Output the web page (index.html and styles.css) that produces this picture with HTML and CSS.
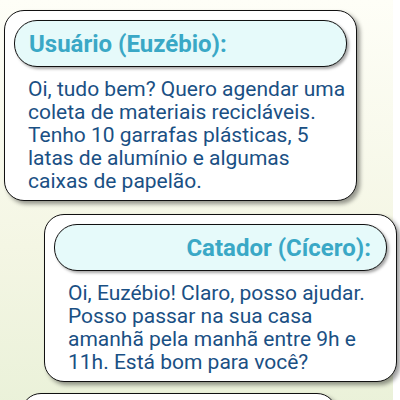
FILE: index.html
```html
<!DOCTYPE html>
<html lang="pt-BR">
<head>
<meta charset="utf-8">
<title>Conversa</title>
<link rel="stylesheet" href="styles.css">
</head>
<body>
<div class="chat">
  <div class="msg msg-user">
    <div class="pill"><span class="name">Usuário (Euzébio):</span></div>
    <p class="text">Oi, tudo bem? Quero agendar uma coleta de materiais recicláveis. Tenho 10 garrafas plásticas, 5 latas de alumínio e algumas caixas de papelão.</p>
  </div>
  <div class="msg msg-catador">
    <div class="pill pill-right"><span class="name">Catador (Cícero):</span></div>
    <p class="text">Oi, Euzébio! Claro, posso ajudar. Posso passar na sua casa amanhã pela manhã entre 9h e 11h. Está bom para você?</p>
  </div>
  <div class="msg msg-third">
    <div class="pill"><span class="name">Usuário (Euzébio):</span></div>
    <p class="text">Perfeito!</p>
  </div>
</div>
</body>
</html>
```
FILE: styles.css
```css
html, body {
  margin: 0;
  padding: 0;
  background: #ffffff;
}
body {
  font-family: Roboto, "Noto Sans", sans-serif;
  overflow: hidden;
  height: 400px;
}
.chat {
  width: 393px;
  min-height: 400px;
  padding-top: 10px;
  box-sizing: border-box;
  background: linear-gradient(180deg, #fefef7 0%, #f4f6e4 50%, #e5efd3 100%);
  display: flex;
  flex-direction: column;
}
.msg {
  box-sizing: border-box;
  width: 353px;
  background: #ffffff;
  border: 1px solid #111;
  border-radius: 20px;
  padding: 9px 9px 7px;
  box-shadow: 3px 3px 4px rgba(0, 0, 0, 0.4);
}
.msg-user {
  margin-left: 4px;
}
.msg-catador {
  margin-left: 44px;
  margin-top: 13px;
}
.msg-third {
  margin-left: 21px;
  margin-top: 11px;
  width: 316px;
}
.pill {
  box-sizing: border-box;
  height: 47px;
  background: #e6fafa;
  border: 1px solid #111;
  border-radius: 23px;
  padding: 0 14px;
  display: flex;
  align-items: center;
  box-shadow: 2px 2px 3px rgba(0, 0, 0, 0.35);
}
.pill-right {
  justify-content: flex-end;
  padding-right: 15px;
}
.name {
  font-size: 24px;
  font-weight: 700;
  color: #3aa8c6;
}
.text {
  margin: 11px 0 0;
  padding: 0 12px 0 14px;
  font-size: 21px;
  line-height: 23px;
  color: #1a5084;
}
.msg-user .text {
  padding-right: 0;
}
```
